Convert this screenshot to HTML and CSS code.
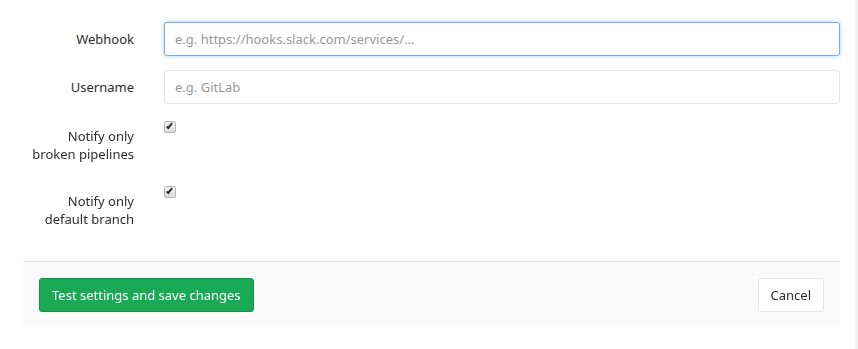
FILE: index.html
```html
<!DOCTYPE html>
<html lang="en">
<head>
    <meta charset="UTF-8">
    <title>Slack notifications</title>
    <link rel="stylesheet" href="styles.css">
</head>
<body>
    <form class="service-form">
        <div class="form-group">
            <label class="control-label" for="webhook">Webhook</label>
            <div class="form-field">
                <input type="text" class="form-control is-focused" id="webhook" placeholder="e.g. https://hooks.slack.com/services/..." autofocus>
            </div>
        </div>
        <div class="form-group">
            <label class="control-label" for="username">Username</label>
            <div class="form-field">
                <input type="text" class="form-control" id="username" placeholder="e.g. GitLab">
            </div>
        </div>
        <div class="form-group group-check">
            <label class="control-label" for="broken">Notify only<br>broken pipelines</label>
            <div class="form-field">
                <input type="checkbox" class="check" id="broken" checked>
            </div>
        </div>
        <div class="form-group group-check">
            <label class="control-label" for="branch">Notify only<br>default branch</label>
            <div class="form-field">
                <input type="checkbox" class="check" id="branch" checked>
            </div>
        </div>

        <div class="form-actions">
            <button type="button" class="btn btn-save">Test settings and save changes</button>
            <button type="button" class="btn btn-cancel">Cancel</button>
        </div>
    </form>
    <div class="scroll-edge"></div>
</body>
</html>
```

FILE: styles.css
```css
body, body *, body *::before, body *::after {
    box-sizing: border-box;
    padding: 0;
    margin: 0;
}
body {
    font-family: "Noto Sans", "Open Sans", sans-serif;
    font-size: 13px;
    color: #2e2e2e;
    background: #fff;
    display: flex;
    height: 349px;
    overflow: hidden;
}
.service-form {
    width: 840px;
    padding: 22px 0 0 23px;
}
.form-group {
    display: flex;
    align-items: flex-start;
    margin-bottom: 14px;
}
.control-label {
    width: 111px;
    margin-right: 30px;
    text-align: right;
    line-height: 18px;
    padding-top: 8px;
}
.form-field {
    flex: 1;
}
.form-control {
    display: block;
    width: 100%;
    height: 34px;
    padding: 6px 10px;
    font: inherit;
    color: #555;
    background: #fff;
    border: 1px solid #e5e5e5;
    border-radius: 3px;
    outline: none;
}
.form-control::placeholder {
    color: #999;
}
.form-control.is-focused {
    border-color: #73afea;
    box-shadow: 0 0 4px rgba(115, 175, 234, 0.6);
}
.group-check .control-label {
    padding-top: 9px;
}
.group-check {
    margin-bottom: 20px;
}
.check {
    appearance: none;
    display: block;
    width: 12px;
    height: 12px;
    margin-top: 3px;
    border: 1px solid #b4b4b4;
    border-radius: 2px;
    background: linear-gradient(#f2f2f2, #dedede);
    position: relative;
}
.check:checked::after {
    content: "";
    position: absolute;
    left: 3px;
    top: 0px;
    width: 3px;
    height: 7px;
    border: solid #333;
    border-width: 0 2px 2px 0;
    transform: rotate(40deg);
}
.form-actions {
    display: flex;
    justify-content: space-between;
    align-items: center;
    margin-top: 33px;
    height: 66px;
    padding: 0 16px;
    background: #fafafa;
    border-top: 1px solid #e5e5e5;
}
.btn {
    font: inherit;
    height: 34px;
    padding: 0 12px;
    border-radius: 3px;
    cursor: pointer;
}
.btn-save {
    color: #fff;
    background: #1aaa55;
    border: 1px solid #168f48;
}
.btn-cancel {
    color: #2e2e2e;
    background: #fff;
    border: 1px solid #e5e5e5;
}
.scroll-edge {
    margin-left: auto;
    width: 3px;
    background: #f0f0f0;
}
```
